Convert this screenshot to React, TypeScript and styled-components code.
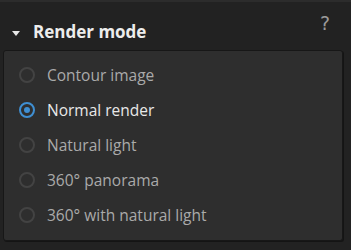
import React, { useState } from "react";
import styled, { createGlobalStyle } from "styled-components";

const Global = createGlobalStyle`
  html, body { margin: 0; padding: 0; background: #222222; }
  body { width: 351px; height: 250px; overflow: hidden; }
`;

const Panel = styled.div`
  width: 351px;
  height: 250px;
  box-sizing: border-box;
  background: #222222;
  border-top: 2px solid #2c2c2c;
  font-family: "Open Sans", "Noto Sans", sans-serif;
  display: flex;
  flex-direction: column;
`;

const Header = styled.div`
  display: flex;
  align-items: flex-start;
  height: 48px;
  padding: 0 0 0 12px;
  position: relative;
`;

const Caret = styled.span`
  width: 0;
  height: 0;
  border-left: 4px solid transparent;
  border-right: 4px solid transparent;
  border-top: 5px solid #e8e8e8;
  margin-top: 29px;
  margin-right: 13px;
`;

const Title = styled.span`
  color: #ededed;
  font-weight: 700;
  font-size: 17px;
  line-height: 22px;
  margin-top: 19px;
`;

const Help = styled.span`
  position: absolute;
  right: 21px;
  top: 9px;
  color: #9a9a9a;
  font-size: 19px;
  line-height: 24px;
  font-family: "DejaVu Sans", sans-serif;
`;

const Box = styled.div`
  margin: 0 8px 0 3px;
  height: 191px;
  box-sizing: border-box;
  background: #2e2e2e;
  border: 1px solid #171717;
  border-radius: 3px;
  box-shadow: 1px 1px 0 #141414;
  display: flex;
  flex-direction: column;
  padding-top: 7px;
`;

const Row = styled.label`
  display: flex;
  align-items: center;
  height: 34.8px;
  padding-left: 15px;
  cursor: pointer;
`;

const Dot = styled.span<{ $on: boolean }>`
  width: 16px;
  height: 16px;
  box-sizing: border-box;
  border-radius: 50%;
  border: 2px solid ${(p) => (p.$on ? "#3f8fd2" : "#434343")};
  display: flex;
  align-items: center;
  justify-content: center;
  margin-right: 12px;
  &::after {
    content: "";
    width: 6px;
    height: 6px;
    border-radius: 50%;
    background: ${(p) => (p.$on ? "#3f8fd2" : "transparent")};
  }
`;

const Label = styled.span<{ $on: boolean }>`
  color: ${(p) => (p.$on ? "#e8e8e8" : "#aaaaaa")};
  font-size: 15.5px;
`;

const options = [
  "Contour image",
  "Normal render",
  "Natural light",
  "360° panorama",
  "360° with natural light",
];

export default function App() {
  const [sel, setSel] = useState(1);
  return (
    <Panel>
      <Global />
      <Header>
        <Caret />
        <Title>Render mode</Title>
        <Help>?</Help>
      </Header>
      <Box>
        {options.map((o, i) => (
          <Row key={o} onClick={() => setSel(i)}>
            <Dot $on={sel === i} />
            <Label $on={sel === i}>{o}</Label>
          </Row>
        ))}
      </Box>
    </Panel>
  );
}
